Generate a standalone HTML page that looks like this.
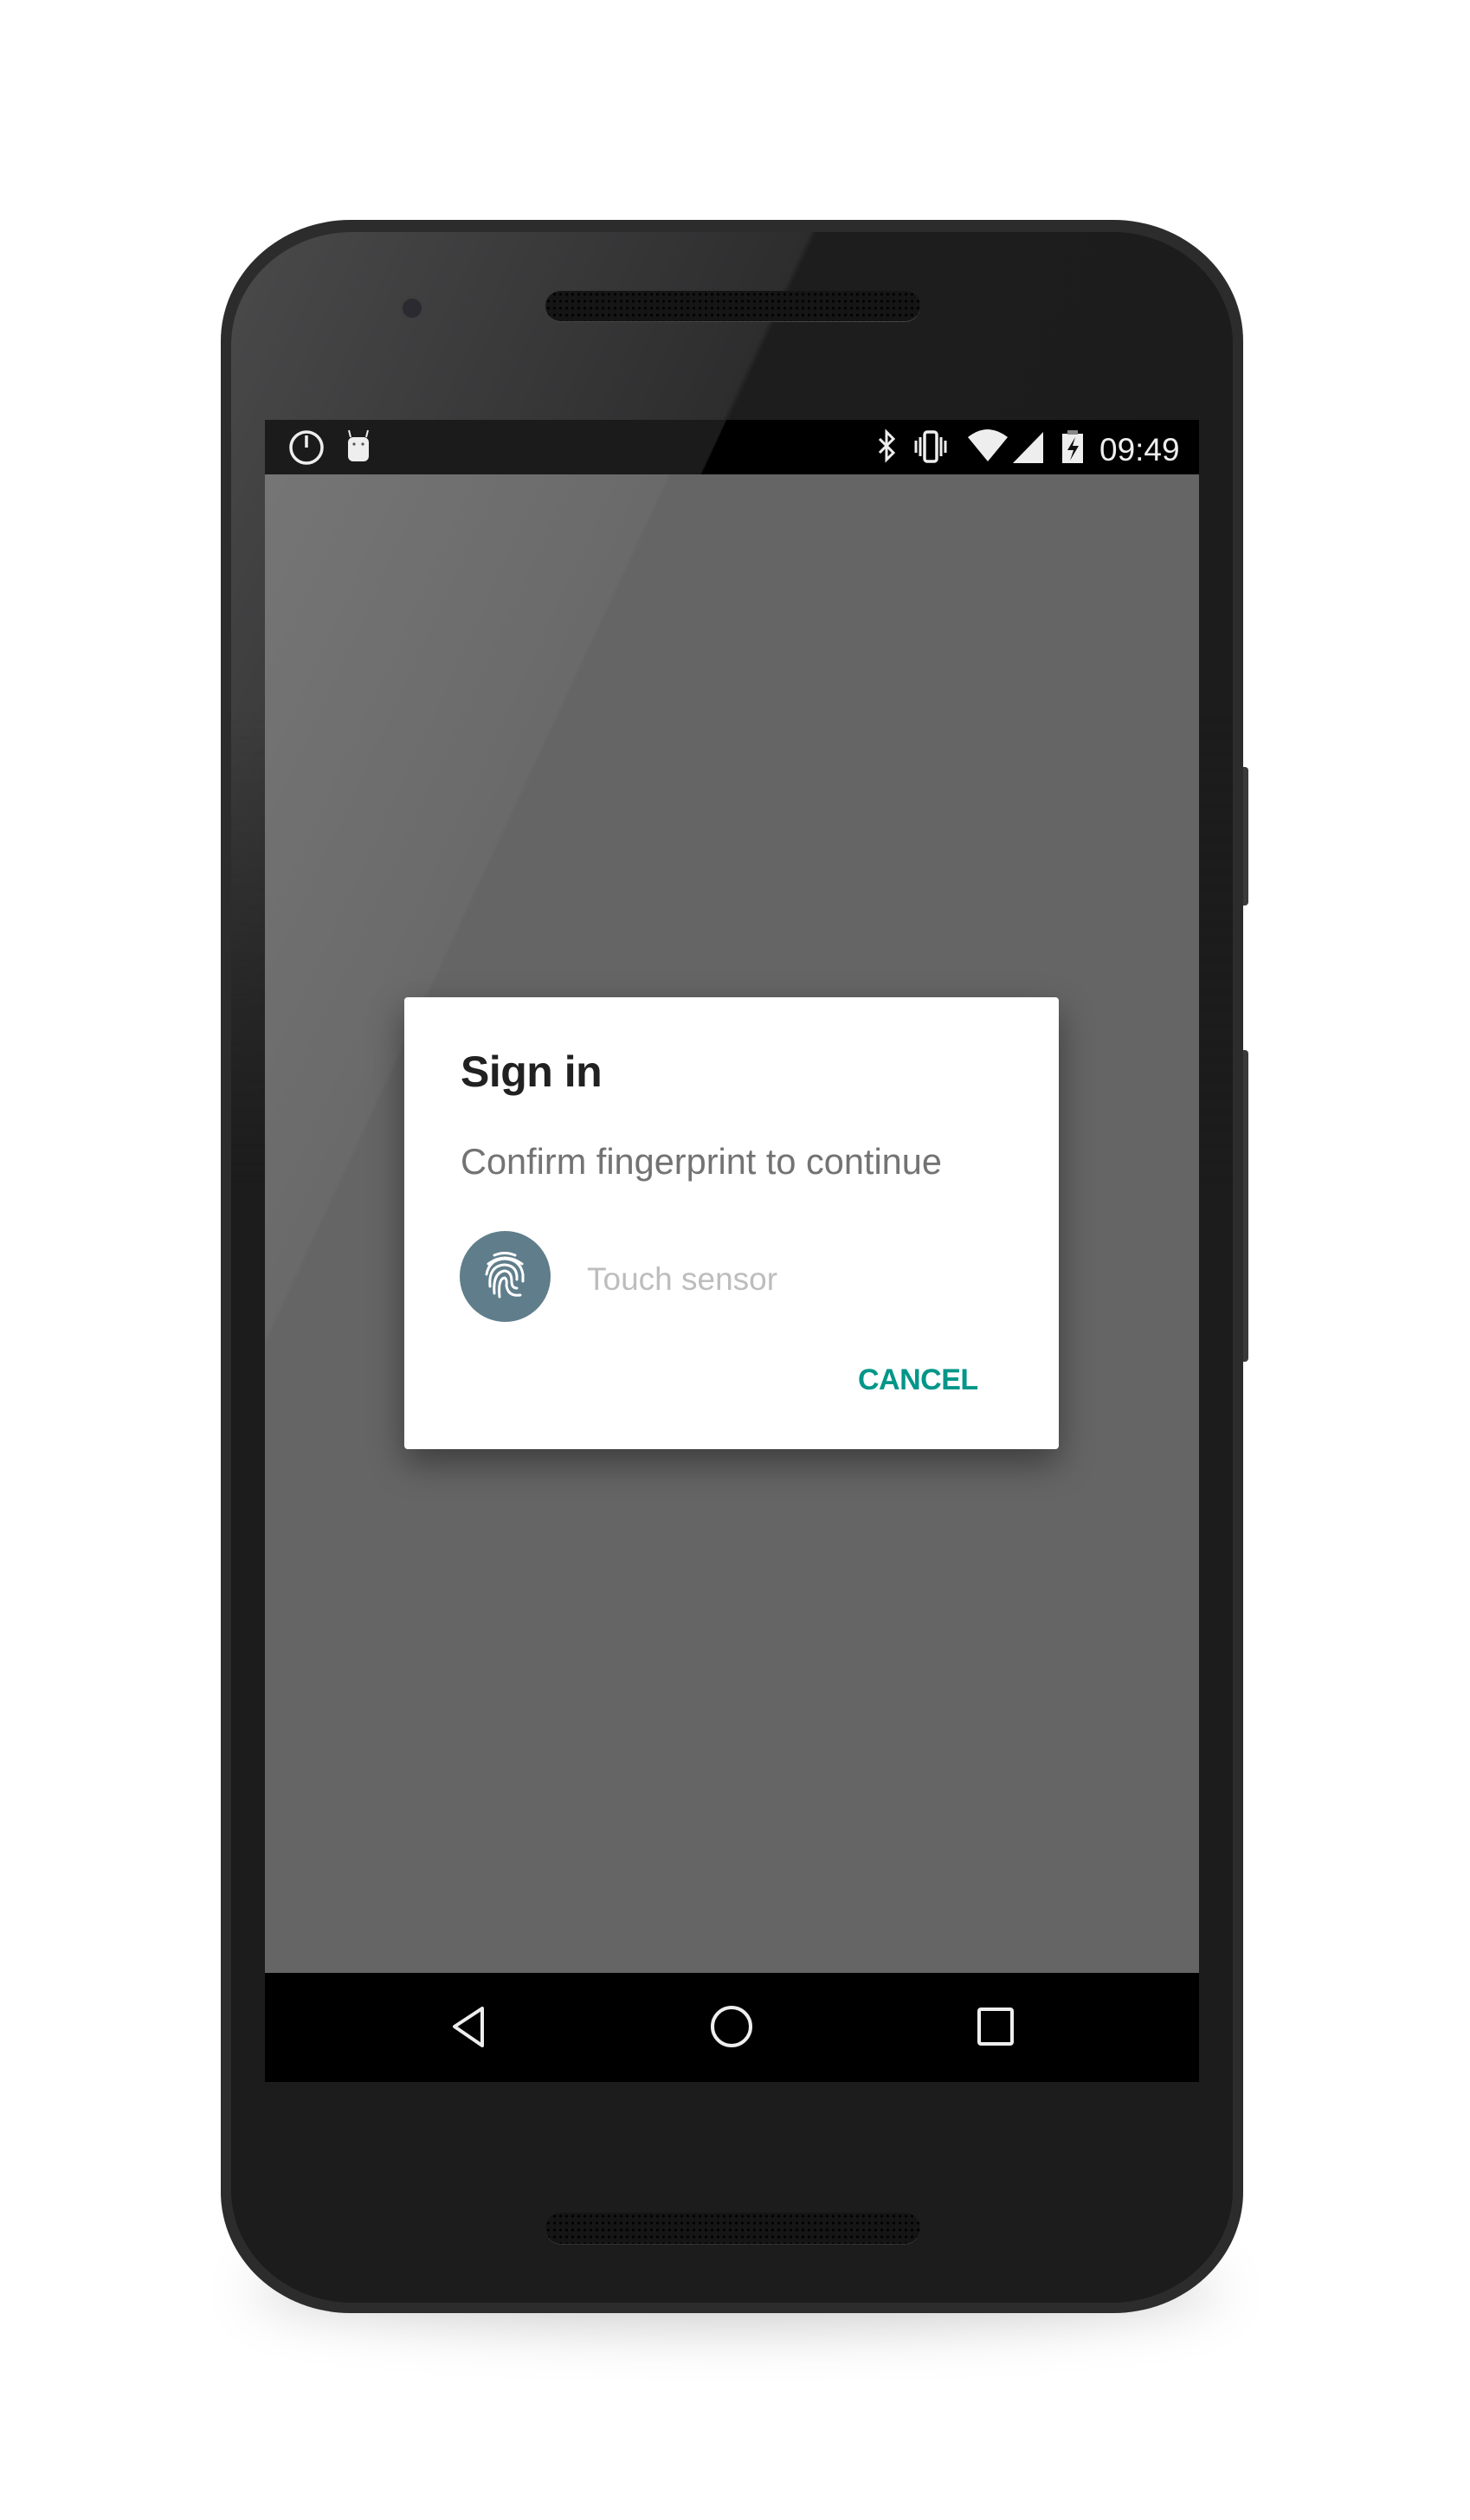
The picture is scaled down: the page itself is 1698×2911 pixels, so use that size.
<!DOCTYPE html>
<html><head><style>
html,body{margin:0;padding:0;background:#fff;}
body{width:1698px;height:2911px;position:relative;overflow:hidden;font-family:"Liberation Sans",sans-serif;}
.abs{position:absolute;}
</style></head><body>
<div class="abs" style="left:290px;top:2600px;width:1120px;height:90px;border-radius:50%;background:rgba(0,0,0,0.18);filter:blur(30px);"></div>
<div class="abs" style="left:1428px;top:886px;width:14px;height:160px;background:#3a3a3a;border-radius:4px;"></div>
<div class="abs" style="left:1428px;top:1213px;width:14px;height:360px;background:#3a3a3a;border-radius:4px;"></div>
<div class="abs" style="left:255px;top:254px;width:1181px;height:2418px;border-radius:150px/140px;background:#2c2c2c;"></div>
<div class="abs" style="left:267px;top:268px;width:1157px;height:2392px;border-radius:140px/130px;background:#1c1c1c;overflow:hidden;">
 <div style="position:absolute;left:0;top:0;width:1157px;height:1100px;background:linear-gradient(115deg,#4a4a4b 0%,#2d2d2e 40%,#1d1d1e 40.5%,#1c1c1c 100%);-webkit-mask-image:linear-gradient(#000 50%,transparent 100%);mask-image:linear-gradient(#000 50%,transparent 100%);"></div>
</div>
<div class="abs" style="left:462px;top:342px;width:22px;height:22px;border-radius:50%;background:#2a2a30;border:3px solid #3e3e3e;"></div>
<div class="abs" style="left:630px;top:336px;width:433px;height:35px;border-radius:18px;background:#151515;background-image:radial-gradient(circle,#000 1.3px,transparent 1.8px);background-size:7px 8px;box-shadow:0 1px 0 #444;"></div>
<div class="abs" style="left:630px;top:2556px;width:433px;height:36px;border-radius:18px;background:#151515;background-image:radial-gradient(circle,#000 1.3px,transparent 1.8px);background-size:7px 8px;box-shadow:0 1px 0 #333;"></div>
<div class="abs" style="left:306px;top:485px;width:1079px;height:1920px;background:linear-gradient(115deg,#767676 0%,#6a6a6a 25%,#656565 25.3%,#656565 100%);"></div>
<div class="abs" style="left:306px;top:485px;width:1079px;height:63px;background:linear-gradient(115deg,#1b1b1b 0%,#1b1b1b 48%,#000 48.2%);"></div>
<svg class="abs" style="left:306px;top:485px" width="1079" height="63" viewBox="0 0 1079 63">
 <circle cx="48" cy="32" r="18" fill="none" stroke="#eee" stroke-width="3.5"/>
 <path d="M48 18 L48 32" stroke="#eee" stroke-width="3.5"/>
 <rect x="96" y="20" width="24" height="28" rx="6" fill="#eee"/>
 <path d="M99 20 L97 12 M117 20 L119 12" stroke="#eee" stroke-width="2"/>
 <circle cx="103" cy="28" r="1.6" fill="#555"/><circle cx="113" cy="28" r="1.6" fill="#555"/>
 <path d="M710 22 L726 38 L718 46 L718 14 L726 22 L710 38" fill="none" stroke="#eee" stroke-width="3"/>
 <rect x="762" y="14" width="14" height="34" rx="3" fill="none" stroke="#eee" stroke-width="3.5"/>
 <path d="M752 24v14M757 20v22M781 20v22M786 24v14" stroke="#eee" stroke-width="3"/>
 <path d="M812 20 Q835 2 858 20 L835 48 Z" fill="#eee"/>
 <path d="M864 50 L899 14 L899 50 Z" fill="#eee"/>
 <rect x="921" y="16" width="24" height="34" fill="#eee"/>
 <rect x="927" y="12" width="12" height="5" fill="#888"/>
 <path d="M936 20 L927 35 L934 35 L930 47 L940 30 L933 30 Z" fill="#111"/>
 <text x="964" y="47" fill="#eee" font-size="37" font-family="Liberation Sans,sans-serif">09:49</text>
</svg>
<div class="abs" style="left:467px;top:1152px;width:756px;height:522px;background:#fff;border-radius:4px;box-shadow:0 16px 40px rgba(0,0,0,0.4);"></div>
<div class="abs" style="left:532px;top:1208px;font-size:50px;color:#212121;font-weight:bold;letter-spacing:-0.5px;line-height:60px;">Sign in</div>
<div class="abs" style="left:532px;top:1318px;font-size:41.5px;color:#737373;line-height:48px;">Confirm fingerprint to continue</div>
<div class="abs" style="left:531px;top:1422px;width:105px;height:105px;border-radius:50%;background:#607d8b;"></div>
<svg class="abs" style="left:531px;top:1422px" width="105" height="105" viewBox="0 0 105 105" fill="none" stroke="#fff" stroke-width="3" stroke-linecap="round">
 <path d="M40 28 Q52 23 64 28"/>
 <path d="M33 38 Q52 24 72 38"/>
 <path d="M31 50 Q34 33 52 32 Q70 33 73 50 L73 58"/>
 <path d="M35 64 Q33 40 52 39 Q67 40 66 56"/>
 <path d="M40 72 Q38 48 52 46 Q60 47 60 58 Q60 66 66 66"/>
 <path d="M46 76 Q44 55 52 54 Q55 56 54 63 Q56 76 70 74"/>
</svg>
<div class="abs" style="left:678px;top:1456px;font-size:37px;color:#bdbdbd;line-height:44px;">Touch sensor</div>
<div class="abs" style="left:991px;top:1572px;font-size:34px;color:#009688;font-weight:bold;line-height:44px;letter-spacing:-0.5px;">CANCEL</div>
<div class="abs" style="left:306px;top:2279px;width:1079px;height:126px;background:#000;"></div>
<svg class="abs" style="left:306px;top:2279px" width="1079" height="126" viewBox="0 0 1079 126" fill="none" stroke="#eee" stroke-width="4">
 <path d="M251 41 L251 84 L219 62 Z" stroke-linejoin="round"/>
 <circle cx="539" cy="62" r="22"/>
 <rect x="825" y="42" width="38" height="40" rx="2"/>
</svg>
</body></html>
